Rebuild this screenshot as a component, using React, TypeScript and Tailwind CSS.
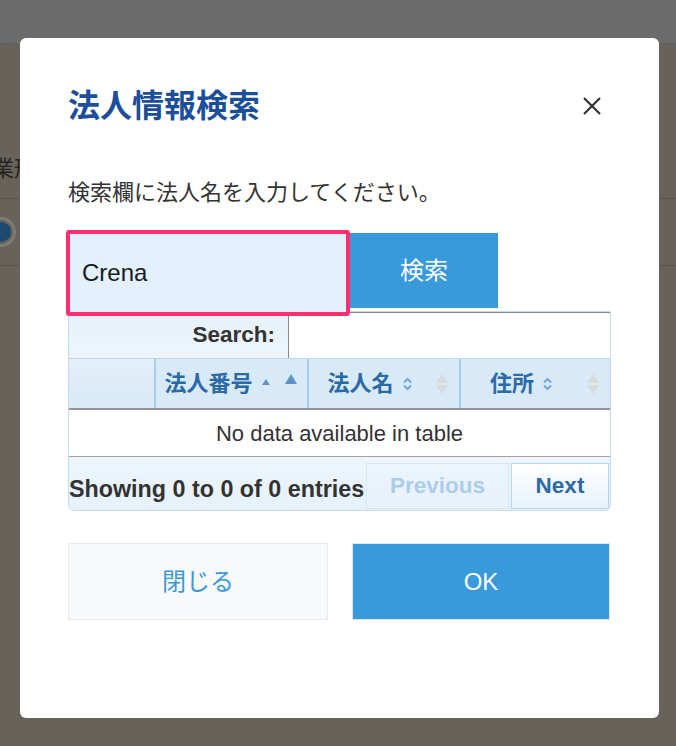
import React from 'react';

const FONT = { fontFamily: '"Liberation Sans", "Noto Sans CJK JP", sans-serif' };

function SortAsc() {
  return (
    <svg width="10" height="8" viewBox="0 0 10 8" className="inline-block ml-[8px] mb-[3px]">
      <path d="M5 1 L9 7 L1 7 Z" fill="#5d93c8" />
    </svg>
  );
}

function SortBoth() {
  return (
    <svg width="11" height="16" viewBox="0 0 11 16" className="inline-block ml-[8px]">
      <path d="M2 6.5 L5.5 3 L9 6.5" stroke="#76a6d6" strokeWidth="2" fill="none" />
      <path d="M2 9.5 L5.5 13 L9 9.5" stroke="#76a6d6" strokeWidth="2" fill="none" />
    </svg>
  );
}

function BgSort({ active }: { active?: boolean }) {
  if (active) {
    return (
      <svg width="14" height="12" viewBox="0 0 14 12" className="absolute right-[9px] top-[14px]">
        <path d="M7 1 L13 11 L1 11 Z" fill="#5d93c8" />
      </svg>
    );
  }
  return (
    <svg width="14" height="22" viewBox="0 0 14 22" className="absolute right-[10px] top-[14px]">
      <path d="M7 1 L13 10 L1 10 Z" fill="#d9dcd8" />
      <path d="M7 21 L13 12 L1 12 Z" fill="#d9dcd8" />
    </svg>
  );
}

export default function App() {
  return (
    <div className="relative w-full h-[746px] overflow-hidden bg-[#67625a]" style={FONT}>
      {/* page behind the overlay */}
      <div className="h-[44px] bg-[#6b6b6b] border-b border-dashed border-[#5f5d5a]" />
      <div className="pt-[110px]">
        <div className="ml-[-8px] text-[22px] leading-[30px] text-[#26241f] whitespace-nowrap">業形態</div>
        <div className="mt-[14px] h-px bg-[#58554f]" />
        <div className="mt-[18px] ml-[-14px] w-[30px] h-[30px] rounded-full border-[3px] border-[#7e7b75] flex items-center justify-center">
          <div className="w-[20px] h-[20px] rounded-full bg-[#1c4a6e]" />
        </div>
        <div className="mt-[18px] h-px bg-[#58554f]" />
      </div>

      {/* modal */}
      <div className="absolute left-[20px] top-[38px] w-[639px] h-[680px] rounded-[6px] bg-white px-[48px] pt-[48px]">
        <div className="flex items-center justify-between h-[40px]">
          <h2 className="text-[32px] font-bold text-[#1b4e9b] leading-[40px]">法人情報検索</h2>
          <svg width="20" height="20" viewBox="0 0 20 20" className="mr-[9px]">
            <path d="M2 2 L18 18 M18 2 L2 18" stroke="#333" strokeWidth="2.2" />
          </svg>
        </div>

        <p className="mt-[52px] text-[22px] leading-[30px] text-[#333]">検索欄に法人名を入力してください。</p>

        <div className="mt-[22px] flex items-start h-[81px]">
          <div className="relative z-10 ml-[-2px] w-[284px] h-[86px] rounded-[3px] border-[4px] border-[#ff2f6f] bg-[#e2f1fd] flex items-center pl-[12px]">
            <span className="text-[24px] text-[#1a1a1a]">Crena</span>
          </div>
          <button className="mt-[3px] w-[148px] h-[75px] bg-[#3899db] text-white text-[24px]">検索</button>
        </div>

        <div className="border border-[#c4dcef] rounded-b-[6px] overflow-hidden">
          <div className="flex items-center h-[46px] bg-gradient-to-b from-[#e6f1fb] to-[#eef5fc]">
            <div className="w-[219px] text-right pr-[13px] text-[22.5px] font-bold text-[#333]">Search:</div>
            <div className="flex-1 h-[46px] bg-white border-t border-l border-[#8a8a8a]" />
          </div>
          <div className="flex h-[52px] bg-[#d8e9f8] border-b-2 border-[#8f959a] border-t border-t-[#b9d6ee]">
            <div className="w-[87px] bg-gradient-to-b from-[#e3eff9] to-[#d9e9f7] border-r-2 border-[#a9cce8]" />
            <div className="relative w-[153px] flex items-center justify-center pr-[28px] border-r-2 border-[#a9cce8] text-[22px] font-bold text-[#2a6aa6]">
              法人番号<SortAsc />
              <BgSort active />
            </div>
            <div className="relative w-[152px] flex items-center justify-center pr-[28px] border-r-2 border-[#a9cce8] text-[22px] font-bold text-[#2a6aa6]">
              法人名<SortBoth />
              <BgSort />
            </div>
            <div className="relative flex-1 flex items-center justify-center pr-[28px] text-[22px] font-bold text-[#2a6aa6]">
              住所<SortBoth />
              <BgSort />
            </div>
          </div>
          <div className="h-[47px] flex items-center justify-center bg-white border-b border-[#a3a3a3] text-[22px] text-[#333]">
            No data available in table
          </div>
          <div className="flex items-end h-[53px] bg-gradient-to-b from-[#eef5fc] to-[#e6f1fa] pb-[1px]">
            <div className="flex-1 pb-[2px] text-[23.3px] font-bold text-[#333] whitespace-nowrap">Showing 0 to 0 of 0 entries</div>
            <div className="w-[143px] h-[46px] flex items-center justify-center border border-[#d9e7f3] text-[22.5px] font-bold text-[#aacdeb]">Previous</div>
            <div className="ml-[2px] mr-[1px] w-[98px] h-[46px] flex items-center justify-center border border-[#b6d4ed] bg-gradient-to-b from-white to-[#e8f2fb] text-[22.5px] font-bold text-[#2a6aa6]">Next</div>
          </div>
        </div>

        <div className="mt-[32px] flex gap-[24px]">
          <button className="w-[260px] h-[77px] bg-[#f7f9fb] border border-[#e7ebf0] text-[24px] text-[#3899db]">閉じる</button>
          <button className="w-[258px] h-[77px] bg-[#3899db] border border-[#d6e7f5] text-[24px] text-white">OK</button>
        </div>
      </div>
    </div>
  );
}
